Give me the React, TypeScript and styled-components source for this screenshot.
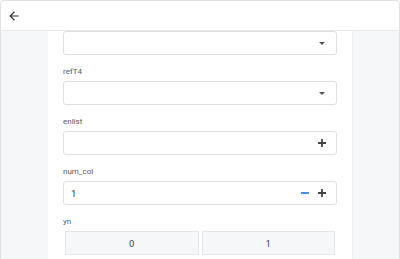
import React from "react";
import styled, { createGlobalStyle } from "styled-components";

const GlobalStyle = createGlobalStyle`
  html, body {
    margin: 0;
    padding: 0;
    background: #ffffff;
  }
  body {
    font-family: Roboto, "Liberation Sans", Arial, sans-serif;
    color: #333;
  }
`;

const Frame = styled.div`
  box-sizing: border-box;
  width: 400px;
  height: 259px;
  border: 1px solid #e2e2e2;
  border-bottom: none;
  border-radius: 4px 4px 0 0;
  overflow: hidden;
  display: flex;
  flex-direction: column;
`;

const Header = styled.div`
  height: 29px;
  flex-shrink: 0;
  display: flex;
  align-items: center;
  padding-left: 6px;
  border-bottom: 1px solid #e8e8e8;
  background: #fff;
`;

const BackButton = styled.button`
  border: none;
  background: none;
  padding: 0;
  width: 14px;
  height: 14px;
  display: flex;
  cursor: pointer;
  color: #333;
`;

const Body = styled.div`
  flex: 1;
  display: flex;
  background: #f6f7f9;
  overflow: hidden;
`;

const Column = styled.div`
  width: 305px;
  margin-left: 47px;
  background: #fff;
  box-sizing: border-box;
  padding: 0 15px;
  border-right: 1px solid #eef0f2;
`;

const Field = styled.div`
  & + & {
    margin-top: 12px;
  }
`;

const Label = styled.div`
  font-size: 8px;
  line-height: 10px;
  color: #5a5a5a;
  margin-bottom: 4px;
`;

const InputBox = styled.div`
  box-sizing: border-box;
  height: 24px;
  border: 1px solid #e0e0e0;
  border-radius: 3px;
  display: flex;
  align-items: center;
  padding: 0 10px 0 7px;
  font-size: 9.5px;
  color: #333;
  background: #fff;
`;

const Value = styled.span`
  flex: 1;
`;

const Caret = styled.span`
  width: 0;
  height: 0;
  border-left: 3px solid transparent;
  border-right: 3px solid transparent;
  border-top: 3.5px solid #555;
  margin-right: 1.5px;
`;

const Actions = styled.div`
  display: flex;
  align-items: center;
  gap: 9px;
`;

const IconButton = styled.span<{ $tone?: "blue" | "dark" }>`
  display: flex;
  color: ${(p) => (p.$tone === "blue" ? "#4a90e2" : "#444")};
`;

const Toggle = styled.div`
  display: grid;
  grid-template-columns: 1fr 1fr;
  gap: 3px;
  padding: 0 2px;
`;

const ToggleButton = styled.button`
  height: 24px;
  border: 1px solid #e4e6e9;
  background: #f6f7f9;
  font-family: inherit;
  font-size: 9.5px;
  color: #444;
  padding: 0;
`;

const PlusIcon = () => (
  <svg width="8" height="8" viewBox="0 0 8 8">
    <path d="M4 0v8M0 4h8" stroke="currentColor" strokeWidth="1.8" />
  </svg>
);

const MinusIcon = () => (
  <svg width="8" height="8" viewBox="0 0 8 8">
    <path d="M0 4h8" stroke="currentColor" strokeWidth="1.8" />
  </svg>
);

const fields = ["refT4"];

export default function App() {
  return (
    <>
      <GlobalStyle />
      <Frame>
        <Header>
          <BackButton aria-label="back">
            <svg width="14" height="14" viewBox="0 0 24 24" fill="currentColor">
              <path d="M20 11H7.83l5.59-5.59L12 4l-8 8 8 8 1.41-1.41L7.83 13H20v-2z" />
            </svg>
          </BackButton>
        </Header>
        <Body>
          <Column>
            <Field>
              <InputBox>
                <Value />
                <Caret />
              </InputBox>
            </Field>
            {fields.map((name) => (
              <Field key={name}>
                <Label>{name}</Label>
                <InputBox>
                  <Value />
                  <Caret />
                </InputBox>
              </Field>
            ))}
            <Field>
              <Label>enlist</Label>
              <InputBox>
                <Value />
                <IconButton>
                  <PlusIcon />
                </IconButton>
              </InputBox>
            </Field>
            <Field>
              <Label>num_col</Label>
              <InputBox>
                <Value>1</Value>
                <Actions>
                  <IconButton $tone="blue">
                    <MinusIcon />
                  </IconButton>
                  <IconButton>
                    <PlusIcon />
                  </IconButton>
                </Actions>
              </InputBox>
            </Field>
            <Field>
              <Label>yn</Label>
              <Toggle>
                <ToggleButton>0</ToggleButton>
                <ToggleButton>1</ToggleButton>
              </Toggle>
            </Field>
          </Column>
        </Body>
      </Frame>
    </>
  );
}
